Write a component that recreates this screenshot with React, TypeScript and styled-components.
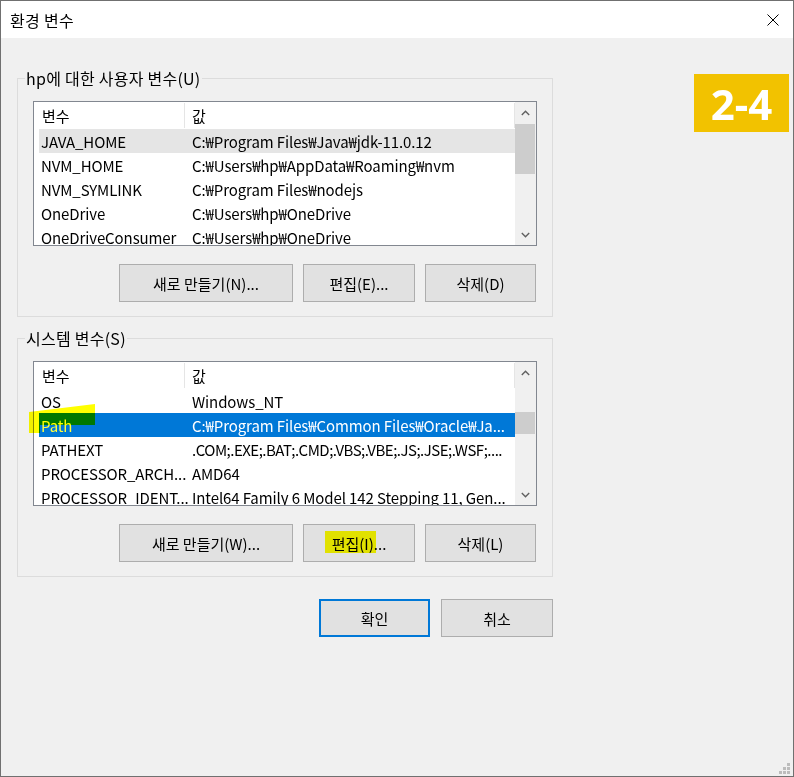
import styled, { createGlobalStyle } from "styled-components";

type RowState = "selected" | "inactive" | "none";

interface EnvVar {
  name: string;
  value: string;
  state?: RowState;
  marked?: boolean;
}

const userVars: EnvVar[] = [
  { name: "JAVA_HOME", value: "C:₩Program Files₩Java₩jdk-11.0.12", state: "inactive" },
  { name: "NVM_HOME", value: "C:₩Users₩hp₩AppData₩Roaming₩nvm" },
  { name: "NVM_SYMLINK", value: "C:₩Program Files₩nodejs" },
  { name: "OneDrive", value: "C:₩Users₩hp₩OneDrive" },
  { name: "OneDriveConsumer", value: "C:₩Users₩hp₩OneDrive" },
];

const systemVars: EnvVar[] = [
  { name: "OS", value: "Windows_NT" },
  { name: "Path", value: "C:₩Program Files₩Common Files₩Oracle₩Ja...", state: "selected", marked: true },
  { name: "PATHEXT", value: ".COM;.EXE;.BAT;.CMD;.VBS;.VBE;.JS;.JSE;.WSF;....", tight: true } as EnvVar,
  { name: "PROCESSOR_ARCH...", value: "AMD64" },
  { name: "PROCESSOR_IDENT...", value: "Intel64 Family 6 Model 142 Stepping 11, Gen..." },
];

function App() {
  return (
    <>
      <GlobalStyle />
      <Window>
        <TitleBar>
          <Title>환경 변수</Title>
          <svg width="12" height="12" viewBox="0 0 12 12">
            <path d="M0.5 0.5 L11.5 11.5 M11.5 0.5 L0.5 11.5" stroke="#000" strokeWidth="1" />
          </svg>
        </TitleBar>

        <Body>
          <GroupBox>
            <Legend>hp에 대한 사용자 변수(U)</Legend>
            <VarList rows={userVars} thumbTop={1} thumbSize={50} />
            <ButtonRow>
              <Button $width={174}>새로 만들기(N)...</Button>
              <Button $width={112}>편집(E)...</Button>
              <Button $width={111}>삭제(D)</Button>
            </ButtonRow>
          </GroupBox>

          <GroupBox $gap={11}>
            <Legend>시스템 변수(S)</Legend>
            <VarList rows={systemVars} thumbTop={29} thumbSize={22} />
            <ButtonRow>
              <Button $width={174}>새로 만들기(W)...</Button>
              <Button $width={112}>편집(I)...</Button>
              <Button $width={111}>삭제(L)</Button>
            </ButtonRow>
          </GroupBox>

          <DialogButtons>
            <Button $width={111} $primary>
              확인
            </Button>
            <Button $width={112}>취소</Button>
          </DialogButtons>
        </Body>

        <Badge>2-4</Badge>
        <PathMarker />
        <EditMarker />
        <Grip width="11" height="11" viewBox="0 0 11 11">
          <rect x="8" y="0" width="3" height="3" />
          <rect x="4" y="4" width="3" height="3" />
          <rect x="8" y="4" width="3" height="3" />
          <rect x="0" y="8" width="3" height="3" />
          <rect x="4" y="8" width="3" height="3" />
          <rect x="8" y="8" width="3" height="3" />
        </Grip>
      </Window>
    </>
  );
}

export default App;

interface VarListProps {
  rows: (EnvVar & { tight?: boolean })[];
  thumbTop: number;
  thumbSize: number;
}

function VarList({ rows, thumbTop, thumbSize }: VarListProps) {
  return (
    <ListBox>
      <ListContent>
        <HeaderRow>
          <HeaderCell $pad={3}>변수</HeaderCell>
          <HeaderCell $pad={7}>값</HeaderCell>
        </HeaderRow>
        {rows.map((row) => (
          <Row key={row.name} $state={row.state ?? "none"}>
            <Cell $pad={2} $marked={row.marked}>
              {row.name}
            </Cell>
            <Cell $pad={7} $tight={row.tight}>
              {row.value}
            </Cell>
          </Row>
        ))}
      </ListContent>
      <ScrollBar>
        <ArrowBox>
          <svg width="9" height="6" viewBox="0 0 9 6">
            <path d="M0.8 5 L4.5 1.3 L8.2 5" fill="none" stroke="#606060" strokeWidth="1.4" />
          </svg>
        </ArrowBox>
        <Track>
          <Thumb $top={thumbTop} $size={thumbSize} />
        </Track>
        <ArrowBox>
          <svg width="9" height="6" viewBox="0 0 9 6">
            <path d="M0.8 1 L4.5 4.7 L8.2 1" fill="none" stroke="#606060" strokeWidth="1.4" />
          </svg>
        </ArrowBox>
      </ScrollBar>
    </ListBox>
  );
}

const GlobalStyle = createGlobalStyle`
  html, body {
    margin: 0;
    padding: 0;
    background: #f0f0f0;
  }
  body {
    font-family: "Noto Sans CJK KR", "Noto Sans", sans-serif;
    font-size: 15px;
    color: #000;
  }
  * {
    box-sizing: border-box;
  }
`;

const Window = styled.div`
  position: relative;
  width: 794px;
  height: 777px;
  border: 1px solid #707070;
  background: #f0f0f0;
  display: flex;
  flex-direction: column;
`;

const TitleBar = styled.div`
  height: 37px;
  background: #fff;
  display: flex;
  align-items: center;
  justify-content: space-between;
  padding: 0 14px 0 9px;
`;

const Title = styled.div`
  font-size: 16px;
  letter-spacing: 0.3px;
  line-height: 20px;
`;

const Body = styled.div`
  flex: 1;
  padding: 30px 0 0 16px;
  display: flex;
  flex-direction: column;
  align-items: flex-start;
`;

const GroupBox = styled.fieldset<{ $gap?: number }>`
  width: 536px;
  margin: ${({ $gap }) => $gap ?? 0}px 0 0 0;
  padding: 13px 15px 14px 15px;
  border: 1px solid #dcdcdc;
  min-inline-size: 0;
`;

const Legend = styled.legend`
  margin-left: -8px;
  padding: 0 1px;
  font-size: 16px;
  letter-spacing: 0.25px;
  line-height: 20px;
  height: 20px;
`;

const ListBox = styled.div`
  height: 145px;
  border: 1px solid #828790;
  background: #fff;
  display: flex;
`;

const ListContent = styled.div`
  flex: 1;
  min-width: 0;
  padding-left: 5px;
  overflow: hidden;
`;

const HeaderRow = styled.div`
  display: grid;
  grid-template-columns: 146px 1fr;
  height: 27px;
`;

const HeaderCell = styled.div<{ $pad: number }>`
  display: flex;
  align-items: center;
  padding-left: ${({ $pad }) => $pad}px;
  border-right: 1px solid #e5e5e5;
  margin: 1px 0;
`;

const Row = styled.div<{ $state: RowState }>`
  display: grid;
  grid-template-columns: 146px 1fr;
  align-items: center;
  height: 24px;
  background: ${({ $state }) =>
    $state === "selected" ? "#0078d7" : $state === "inactive" ? "#e5e5e5" : "transparent"};
  color: ${({ $state }) => ($state === "selected" ? "#fff" : "#000")};
`;

const Cell = styled.div<{ $pad: number; $marked?: boolean; $tight?: boolean }>`
  padding-left: ${({ $pad }) => $pad}px;
  white-space: nowrap;
  letter-spacing: ${({ $tight }) => ($tight ? "-0.5px" : "-0.1px")};
  color: ${({ $marked }) => ($marked ? "#ffff40" : "inherit")};
`;

const ScrollBar = styled.div`
  width: 21px;
  background: #f0f0f0;
  display: flex;
  flex-direction: column;
`;

const ArrowBox = styled.div`
  height: 21px;
  display: flex;
  align-items: center;
  justify-content: center;
`;

const Track = styled.div`
  flex: 1;
`;

const Thumb = styled.div<{ $top: number; $size: number }>`
  margin-top: ${({ $top }) => $top}px;
  height: ${({ $size }) => $size}px;
  width: 20px;
  background: #cdcdcd;
`;

const ButtonRow = styled.div`
  display: flex;
  justify-content: flex-end;
  gap: 10px;
  margin-top: 18px;
  padding-right: 1px;
`;

const DialogButtons = styled.div`
  width: 536px;
  display: flex;
  justify-content: flex-end;
  gap: 11px;
  margin-top: 22px;
`;

const Button = styled.button<{ $width: number; $primary?: boolean }>`
  width: ${({ $width }) => $width}px;
  height: 38px;
  border: ${({ $primary }) => ($primary ? "2px solid #0078d7" : "1px solid #adadad")};
  background: #e1e1e1;
  font-family: inherit;
  font-size: 15px;
  color: #000;
  padding: 0;
  display: flex;
  align-items: center;
  justify-content: center;
`;

const Badge = styled.div`
  position: absolute;
  left: 693px;
  top: 73px;
  width: 95px;
  height: 58px;
  background: #f2c200;
  color: #fff;
  font-family: "Noto Sans", sans-serif;
  font-weight: 700;
  font-size: 42px;
  display: flex;
  align-items: center;
  justify-content: center;
`;

const Marker = styled.div`
  position: absolute;
  background: #ffff00;
  mix-blend-mode: multiply;
  pointer-events: none;
`;

const PathMarker = styled(Marker)`
  left: 28px;
  top: 403px;
  width: 66px;
  height: 29px;
  clip-path: polygon(0 8px, 66px 0, 66px 21px, 11px 21px, 11px 29px, 0 29px);
`;

const EditMarker = styled(Marker)`
  left: 324px;
  top: 530px;
  width: 51px;
  height: 22px;
`;

const Grip = styled.svg`
  position: absolute;
  right: 3px;
  bottom: 2px;
  fill: #bcbcbc;
`;
